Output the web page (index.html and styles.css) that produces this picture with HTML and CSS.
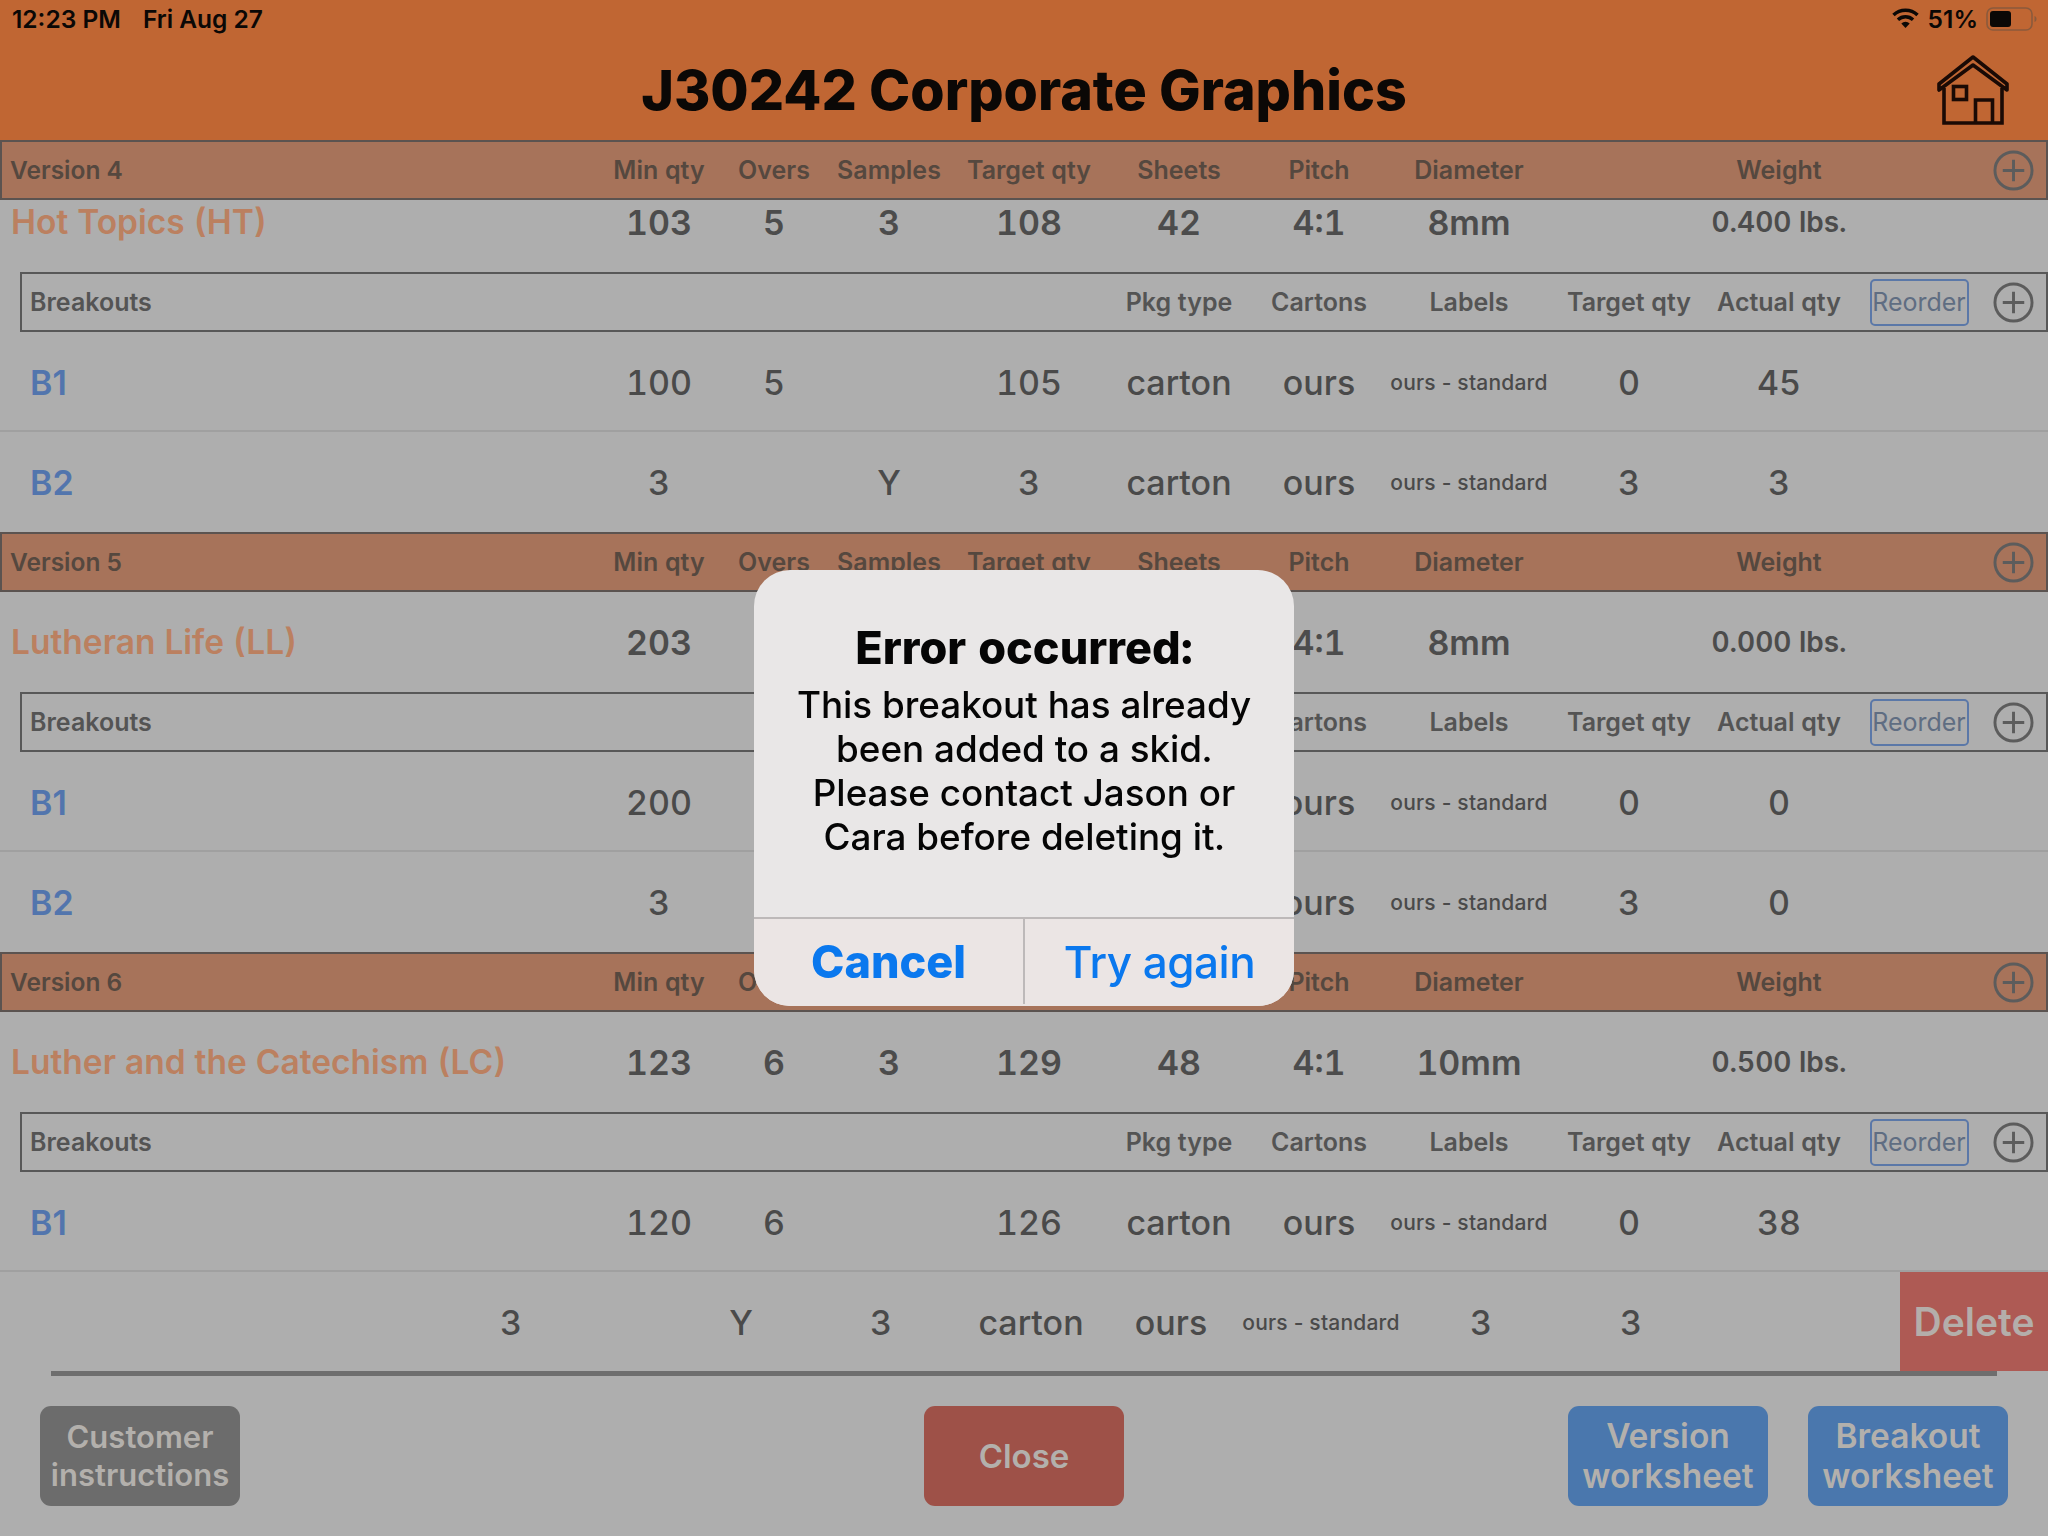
FILE: index.html
```html
<!DOCTYPE html>
<html lang="en">
<head>
<meta charset="utf-8">
<title>J30242 Corporate Graphics</title>
<link rel="stylesheet" href="styles.css">
</head>
<body>
<div class="app">
  <header class="top">
    <div class="status">
      <div class="clock"><span>12:23 PM</span><span>Fri Aug 27</span></div>
      <div class="sys">
        <svg class="wifi" viewBox="0 0 28 20"><path d="M14 20l-4.2-4.6a6 6 0 0 1 8.4 0z"/><path d="M7.6 13.1L5.3 10.6a12.6 12.6 0 0 1 17.4 0l-2.3 2.5a9.2 9.2 0 0 0-12.8 0z"/><path d="M3.2 8.3L.8 5.7a19.4 19.4 0 0 1 26.4 0l-2.4 2.6a16 16 0 0 0-21.6 0z"/></svg>
        <span>51%</span>
        <svg class="battery" viewBox="0 0 51 24"><rect x="1" y="1" width="45" height="22" rx="6" fill="none" stroke="#8a5a3c" stroke-width="1.6"/><rect x="4" y="4" width="21" height="16" rx="3" fill="#0b0806"/><path d="M48.5 9c1.500.5 2 1.600 2 3s-.5 2.500-2 3z" fill="#8a5a3c"/></svg>
      </div>
    </div>
    <div class="title-row">
      <h1>J30242 Corporate Graphics</h1>
      <svg class="home" viewBox="0 0 72 70" fill="none" stroke="#1a0a05" stroke-width="3.600"><path d="M2 29L36 2l34 27v6L36 10 2 35z" stroke-linejoin="round"/><path d="M7 33v35h58V33"/><rect x="16.500" y="31.500" width="13" height="13"/><path d="M38.500 68V45h17v23"/></svg>
    </div>
  </header>

  <main class="list">
    <div class="vbar cols"><b class="lbl">Version 4</b><span>Min qty</span><span>Overs</span><span>Samples</span><span>Target qty</span><span>Sheets</span><span>Pitch</span><span>Diameter</span><span></span><span>Weight</span><span></span><svg class="plus" viewBox="0 0 42 42"><circle cx="21" cy="21" r="19"/><path d="M21 10v22M10 21h22"/></svg></div>
    <div class="title-line cols scrolled"><b class="name">Hot Topics (HT)</b><span>103</span><span>5</span><span>3</span><span>108</span><span>42</span><span>4:1</span><span>8mm</span><span></span><span class="wt">0.400 lbs.</span></div>
    <div class="bbar cols"><b class="lbl">Breakouts</b><span></span><span></span><span></span><span></span><span>Pkg type</span><span>Cartons</span><span>Labels</span><span>Target qty</span><span>Actual qty</span><a class="reorder">Reorder</a><svg class="plus" viewBox="0 0 42 42"><circle cx="21" cy="21" r="19"/><path d="M21 10v22M10 21h22"/></svg></div>
    <div class="row cols sep"><b class="bname">B1</b><span>100</span><span>5</span><span></span><span>105</span><span>carton</span><span>ours</span><span class="small">ours - standard</span><span>0</span><span>45</span></div>
    <div class="row cols"><b class="bname">B2</b><span>3</span><span></span><span>Y</span><span>3</span><span>carton</span><span>ours</span><span class="small">ours - standard</span><span>3</span><span>3</span></div>

    <div class="vbar cols"><b class="lbl">Version 5</b><span>Min qty</span><span>Overs</span><span>Samples</span><span>Target qty</span><span>Sheets</span><span>Pitch</span><span>Diameter</span><span></span><span>Weight</span><span></span><svg class="plus" viewBox="0 0 42 42"><circle cx="21" cy="21" r="19"/><path d="M21 10v22M10 21h22"/></svg></div>
    <div class="title-line cols"><b class="name">Lutheran Life (LL)</b><span>203</span><span></span><span></span><span></span><span></span><span>4:1</span><span>8mm</span><span></span><span class="wt">0.000 lbs.</span></div>
    <div class="bbar cols"><b class="lbl">Breakouts</b><span></span><span></span><span></span><span></span><span></span><span>Cartons</span><span>Labels</span><span>Target qty</span><span>Actual qty</span><a class="reorder">Reorder</a><svg class="plus" viewBox="0 0 42 42"><circle cx="21" cy="21" r="19"/><path d="M21 10v22M10 21h22"/></svg></div>
    <div class="row cols sep"><b class="bname">B1</b><span>200</span><span></span><span></span><span></span><span></span><span>ours</span><span class="small">ours - standard</span><span>0</span><span>0</span></div>
    <div class="row cols"><b class="bname">B2</b><span>3</span><span></span><span></span><span></span><span></span><span>ours</span><span class="small">ours - standard</span><span>3</span><span>0</span></div>

    <div class="vbar cols"><b class="lbl">Version 6</b><span>Min qty</span><span>Overs</span><span>Samples</span><span>Target qty</span><span>Sheets</span><span>Pitch</span><span>Diameter</span><span></span><span>Weight</span><span></span><svg class="plus" viewBox="0 0 42 42"><circle cx="21" cy="21" r="19"/><path d="M21 10v22M10 21h22"/></svg></div>
    <div class="title-line cols"><b class="name">Luther and the Catechism (LC)</b><span>123</span><span>6</span><span>3</span><span>129</span><span>48</span><span>4:1</span><span>10mm</span><span></span><span class="wt">0.500 lbs.</span></div>
    <div class="bbar cols"><b class="lbl">Breakouts</b><span></span><span></span><span></span><span></span><span>Pkg type</span><span>Cartons</span><span>Labels</span><span>Target qty</span><span>Actual qty</span><a class="reorder">Reorder</a><svg class="plus" viewBox="0 0 42 42"><circle cx="21" cy="21" r="19"/><path d="M21 10v22M10 21h22"/></svg></div>
    <div class="row cols sep"><b class="bname">B1</b><span>120</span><span>6</span><span></span><span>126</span><span>carton</span><span>ours</span><span class="small">ours - standard</span><span>0</span><span>38</span></div>
    <div class="swipe">
      <div class="row cols swiped"><span></span><span>3</span><span></span><span>Y</span><span>3</span><span>carton</span><span>ours</span><span class="small">ours - standard</span><span>3</span><span>3</span></div>
      <a class="delete">Delete</a>
    </div>
  </main>

  <div class="rule"></div>

  <footer class="foot">
    <a class="btn grey">Customer<br>instructions</a>
    <a class="btn red">Close</a>
    <div class="foot-right">
      <a class="btn blue">Version<br>worksheet</a>
      <a class="btn blue">Breakout<br>worksheet</a>
    </div>
  </footer>
</div>

<div class="alert">
  <div class="alert-body">
    <h2>Error occurred:</h2>
    <p>This breakout has already<br>been added to a skid.<br>Please contact Jason or<br>Cara before deleting it.</p>
  </div>
  <div class="alert-actions">
    <a class="cancel">Cancel</a>
    <a class="retry">Try again</a>
  </div>
</div>
</body>
</html>
```
FILE: styles.css
```css
* { box-sizing: border-box; }
html, body { margin: 0; padding: 0; }
body {
  width: 2048px;
  height: 1536px;
  overflow: hidden;
  background: #aeaeae;
  color: #4a4a4a;
  font-family: Inter, "Noto Sans", "Liberation Sans", sans-serif;
  font-variant-numeric: tabular-nums;
  position: relative;
}
.app { width: 2048px; height: 1536px; display: flex; flex-direction: column; overflow: hidden; }

.top { height: 140px; background: #c06633; color: #0b0806; flex: none; position: relative; z-index: 2; }
.status { height: 38px; display: flex; justify-content: space-between; align-items: center; padding: 0 11px 0 12px; font-size: 24.500px; font-weight: 600; font-variant-numeric: normal; }
.clock { display: flex; gap: 22px; }
.sys { display: flex; align-items: center; gap: 8px; }
.wifi { width: 29px; height: 20px; fill: #0b0806; margin-bottom: 2px; }
.battery { width: 51px; height: 24px; }
.title-row { height: 102px; position: relative; display: flex; align-items: center; justify-content: center; }
h1 { margin: 0; font-size: 55.500px; font-weight: 800; letter-spacing: 0; color: #0b0806; font-variant-numeric: normal; }
.home { position: absolute; right: 39px; top: 17px; width: 72px; height: 70px; }

.list { flex: none; height: 1231px; overflow: hidden; }
.cols {
  display: grid;
  grid-template-columns: 601px 116px 114px 116px 164px 136px 144px 156px 164px 136px 144px 44px 13px;
  align-items: center;
  justify-items: center;
  text-align: center;
  white-space: nowrap;
}
.cols > :first-child { justify-self: start; }

.vbar {
  height: 60px;
  background: #a7735a;
  box-shadow: inset 0 0 0 2px #5b5350;
  font-size: 25px;
  font-weight: 600;
  color: #55483f;
  position: relative;
  z-index: 1;
}
.vbar .lbl { padding-left: 10px; font-size: 24.500px; font-variant-numeric: normal; }
.lbl { font-weight: 600; }
.bbar {
  height: 60px;
  margin-left: 20px;
  grid-template-columns: 581px 116px 114px 116px 164px 136px 144px 156px 164px 136px 144px 44px 13px;
  box-shadow: inset 0 0 0 2px #585858;
  font-size: 25px;
  font-weight: 600;
  color: #545454;
}
.bbar .lbl { padding-left: 10px; }

.title-line { height: 100px; font-size: 34px; font-weight: 600; color: #4c4c4c; }
.title-line.scrolled { margin-top: -28px; }
.name { padding-left: 11px; font-size: 33.500px; font-weight: 600; color: #bb8060; }
.wt { font-size: 28px; font-weight: 600; }

.row { height: 100px; font-size: 34px; font-weight: 500; color: #4a4a4a; }
.row.sep { box-shadow: inset 0 -2px 0 #a0a0a0; }
.bname { padding-left: 30px; font-size: 34px; font-weight: 600; color: #5275ad; font-variant-numeric: normal; }
.small { font-size: 21px; font-weight: 500; letter-spacing: .2px; font-variant-numeric: normal; }

.reorder {
  width: 99px;
  height: 47px;
  display: flex;
  align-items: center;
  justify-content: center;
  border: 2px solid #5b78a8;
  border-radius: 5px;
  font-size: 25px;
  font-weight: 400;
  color: #5f6d82;
}
.plus { width: 41px; height: 41px; fill: none; stroke: #5c5c5c; stroke-width: 3; }

.swipe { position: relative; height: 100px; overflow: hidden; }
.swiped { width: 2048px; margin-left: -148px; }
.delete {
  position: absolute;
  right: 0; top: 0; bottom: 1px;
  width: 148px;
  background: #ae5a54;
  color: #b4aeaa;
  font-size: 39px;
  font-weight: 600;
  display: flex;
  align-items: center;
  justify-content: center;
}

.rule { flex: none; height: 5px; margin: 0 51px; background: #6e6e6e; }

.foot {
  flex: none;
  padding: 30px 40px 0;
  display: grid;
  grid-template-columns: 1fr auto 1fr;
  align-items: start;
}
.foot-right { display: flex; gap: 40px; justify-self: end; }
.btn {
  width: 200px;
  height: 100px;
  border-radius: 11px;
  display: flex;
  align-items: center;
  justify-content: center;
  text-align: center;
  font-weight: 600;
  color: #b3b0ac;
}
.grey { background: #6c6c6c; font-size: 31px; line-height: 38px; justify-self: start; }
.red { background: #9e5148; font-size: 33px; }
.blue { background: #4a77ad; font-size: 33.500px; line-height: 40px; }

.alert {
  position: fixed;
  left: 754px;
  top: 570px;
  width: 540px;
  height: 436px;
  background: #e9e7e7;
  border-radius: 36px;
  overflow: hidden;
  display: flex;
  flex-direction: column;
  color: #050505;
  text-align: center;
  z-index: 5;
}
.alert-body { flex: none; height: 349px; padding-top: 51px; border-bottom: 2px solid #bdb9b9; }
h2 { margin: 0; font-size: 45px; line-height: 54px; font-weight: 800; }
.alert-body p { margin: 8px 0 0; font-size: 36.800px; line-height: 44px; font-weight: 500; }
.alert-actions { flex: 1; display: grid; grid-template-columns: 271px 1fr; background: #ebe5e4; color: #0a78ee; font-size: 45px; padding-bottom: 2px; }
.alert-actions a { display: flex; align-items: center; justify-content: center; }
.cancel { font-weight: 800; font-size: 45px; border-right: 2px solid #bdb9b9; }
.retry { font-weight: 500; font-size: 44px; letter-spacing: -.5px; }
```
